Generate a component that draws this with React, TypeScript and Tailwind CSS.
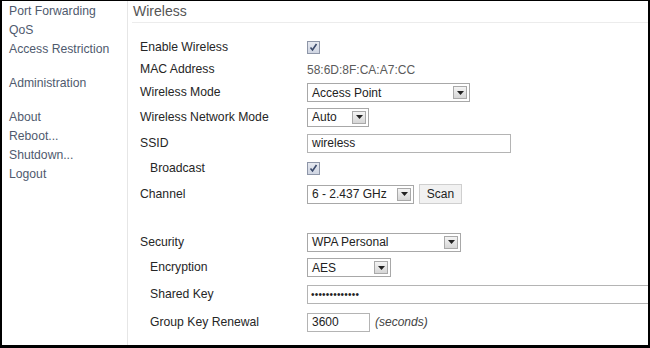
import React from "react";

const font = { fontFamily: '"Liberation Sans", Arial, sans-serif' };

const navGroups = [
  ["Port Forwarding", "QoS", "Access Restriction"],
  ["Administration"],
  ["About", "Reboot...", "Shutdown...", "Logout"],
];

function Arrow() {
  return (
    <span className="flex h-[13px] w-[14px] items-center justify-center border border-[#a9a9a9] bg-gradient-to-b from-[#f4f4f4] to-[#d6d6d6]">
      <svg width="7" height="4" viewBox="0 0 7 4">
        <path d="M0 0h7L3.5 4z" fill="#222" />
      </svg>
    </span>
  );
}

function Select({ value, w }: { value: string; w: string }) {
  return (
    <div
      className={`flex h-[19px] items-center justify-between border border-[#a8a8a8] bg-white pl-[4px] pr-[2px] text-[12px] text-[#222] ${w}`}
    >
      <span>{value}</span>
      <Arrow />
    </div>
  );
}

function Check() {
  return (
    <span className="flex h-[13px] w-[13px] items-center justify-center border border-[#8e96a8] bg-gradient-to-b from-[#e6e9f0] to-[#cfd5e2]">
      <svg width="9" height="9" viewBox="0 0 9 9">
        <path d="M1.5 4.5l2 2.5L7.5 1" stroke="#3b4a6b" strokeWidth="1.6" fill="none" />
      </svg>
    </span>
  );
}

function Row({
  label,
  h,
  indent,
  children,
}: {
  label: string;
  h: string;
  indent?: boolean;
  children?: React.ReactNode;
}) {
  return (
    <div className={`flex items-center ${h}`}>
      <div className={`w-[167px] shrink-0 text-[12.2px] text-[#262626] ${indent ? "pl-[10px]" : ""}`}>
        {label}
      </div>
      <div className="flex items-center gap-[5px]">{children}</div>
    </div>
  );
}

export default function App() {
  return (
    <div
      style={font}
      className="flex h-[348px] w-[650px] overflow-hidden border-t border-r-2 border-b-[3px] border-l-2 border-black bg-white"
    >
      {/* Sidebar */}
      <nav className="w-[126px] shrink-0 border-r border-[#e6e6e6] pt-[1px] pl-[7px]">
        {navGroups.map((group, i) => (
          <div key={i} className={i > 0 ? "mt-[15px]" : ""}>
            {group.map((item) => (
              <div key={item} className="h-[19px] text-[12.2px] leading-[19px] text-[#4f5a6e]">
                {item}
              </div>
            ))}
          </div>
        ))}
      </nav>

      {/* Main panel */}
      <main className="flex-1">
        <div className="mx-[4px] h-[22px] border-b border-[#ececec] pl-[1px] text-[14px] leading-[21px] text-[#555]">
          Wireless
        </div>
        <div className="mt-[13px] pl-[12px]">
          <Row label="Enable Wireless" h="h-[22px]">
            <Check />
          </Row>
          <Row label="MAC Address" h="h-[23px]">
            <span className="text-[12px] text-[#5a5a5a]">58:6D:8F:CA:A7:CC</span>
          </Row>
          <Row label="Wireless Mode" h="h-[23px]">
            <Select value="Access Point" w="w-[163px]" />
          </Row>
          <Row label="Wireless Network Mode" h="h-[26px]">
            <Select value="Auto" w="w-[62px]" />
          </Row>
          <Row label="SSID" h="h-[26px]">
            <div className="flex h-[19px] w-[204px] items-center border border-[#b4b4b4] bg-white pl-[4px] text-[12px] text-[#222]">
              wireless
            </div>
          </Row>
          <Row label="Broadcast" h="h-[25px]" indent>
            <Check />
          </Row>
          <Row label="Channel" h="h-[26px]">
            <Select value="6 - 2.437 GHz" w="w-[107px]" />
            <div className="flex h-[20px] w-[43px] items-center justify-center border border-[#cfcfcf] bg-[#f1f1f1] text-[12px] text-[#222]">
              Scan
            </div>
          </Row>
          <div className="h-[22px]" />
          <Row label="Security" h="h-[26px]">
            <Select value="WPA Personal" w="w-[154px]" />
          </Row>
          <Row label="Encryption" h="h-[25px]" indent>
            <Select value="AES" w="w-[84px]" />
          </Row>
          <Row label="Shared Key" h="h-[28px]" indent>
            <div className="flex h-[19px] w-[360px] items-center border border-[#b4b4b4] bg-white pl-[3px] text-[10px] tracking-[0.2px] text-[#222]">
              •••••••••••••
            </div>
          </Row>
          <Row label="Group Key Renewal" h="h-[28px]" indent>
            <div className="flex h-[19px] w-[63px] items-center border border-[#b4b4b4] bg-white pl-[4px] text-[12px] text-[#222]">
              3600
            </div>
            <span className="text-[12px] italic text-[#444]">(seconds)</span>
          </Row>
        </div>
      </main>
    </div>
  );
}
